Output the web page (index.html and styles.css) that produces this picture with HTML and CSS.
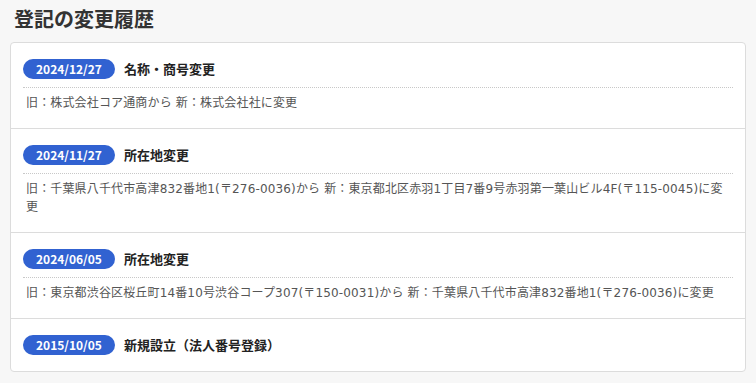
FILE: index.html
```html
<!DOCTYPE html>
<html lang="ja">
<head>
  <meta charset="UTF-8" />
  <title>登記の変更履歴</title>
  <link rel="stylesheet" href="styles.css">
</head>
<body>

  <h2 class="section-title">登記の変更履歴</h2>

  <div class="history-card">
    <div class="history-item">
      <div class="history-head">
        <span class="date-badge">2024/12/27</span>
        <span class="history-title">名称・商号変更</span>
      </div>
      <p class="history-detail">旧：株式会社コア通商から 新：株式会社社に変更</p>
    </div>

    <div class="history-item">
      <div class="history-head">
        <span class="date-badge">2024/11/27</span>
        <span class="history-title">所在地変更</span>
      </div>
      <p class="history-detail">旧：千葉県八千代市高津832番地1(〒276-0036)から 新：東京都北区赤羽1丁目7番9号赤羽第一葉山ビル4F(〒115-0045)に変更</p>
    </div>

    <div class="history-item">
      <div class="history-head">
        <span class="date-badge">2024/06/05</span>
        <span class="history-title">所在地変更</span>
      </div>
      <p class="history-detail">旧：東京都渋谷区桜丘町14番10号渋谷コープ307(〒150-0031)から 新：千葉県八千代市高津832番地1(〒276-0036)に変更</p>
    </div>

    <div class="history-item">
      <div class="history-head">
        <span class="date-badge">2015/10/05</span>
        <span class="history-title">新規設立（法人番号登録）</span>
      </div>
    </div>
  </div>

</body>
</html>
```

FILE: styles.css
```css
* {
  box-sizing: border-box;
  margin: 0;
  padding: 0;
  font-family: "Noto Sans CJK JP", "Noto Sans", sans-serif;
}

body {
  background-color: #f7f7f7;
  color: #333;
  padding: 6px 10px 12px;
}

.section-title {
  font-size: 20px;
  line-height: 26px;
  font-weight: bold;
  color: #333;
  padding-left: 4px;
  margin-bottom: 10px;
}

.history-card {
  background-color: #fff;
  border: 1px solid #dcdcdc;
  border-radius: 4px;
}

.history-item {
  padding: 16px 12px;
  border-bottom: 1px solid #dcdcdc;
}

.history-item:last-child {
  border-bottom: none;
}

.history-head {
  display: flex;
  align-items: center;
  gap: 9px;
  height: 20px;
}

.date-badge {
  display: inline-block;
  height: 20px;
  line-height: 20px;
  padding: 0 13px;
  border-radius: 10px;
  background-color: #3162d1;
  color: #fff;
  font-size: 12px;
  font-weight: bold;
}

.history-title {
  font-size: 13px;
  line-height: 20px;
  font-weight: bold;
  color: #222;
}

.history-detail {
  margin-top: 8px;
  border-top: 1px dotted #c8c8c8;
  padding: 6px 3px 0;
  font-family: "DejaVu Sans", "Noto Sans CJK JP", sans-serif;
  font-size: 12px;
  line-height: 18px;
  letter-spacing: 0.15px;
  color: #555;
}
```
